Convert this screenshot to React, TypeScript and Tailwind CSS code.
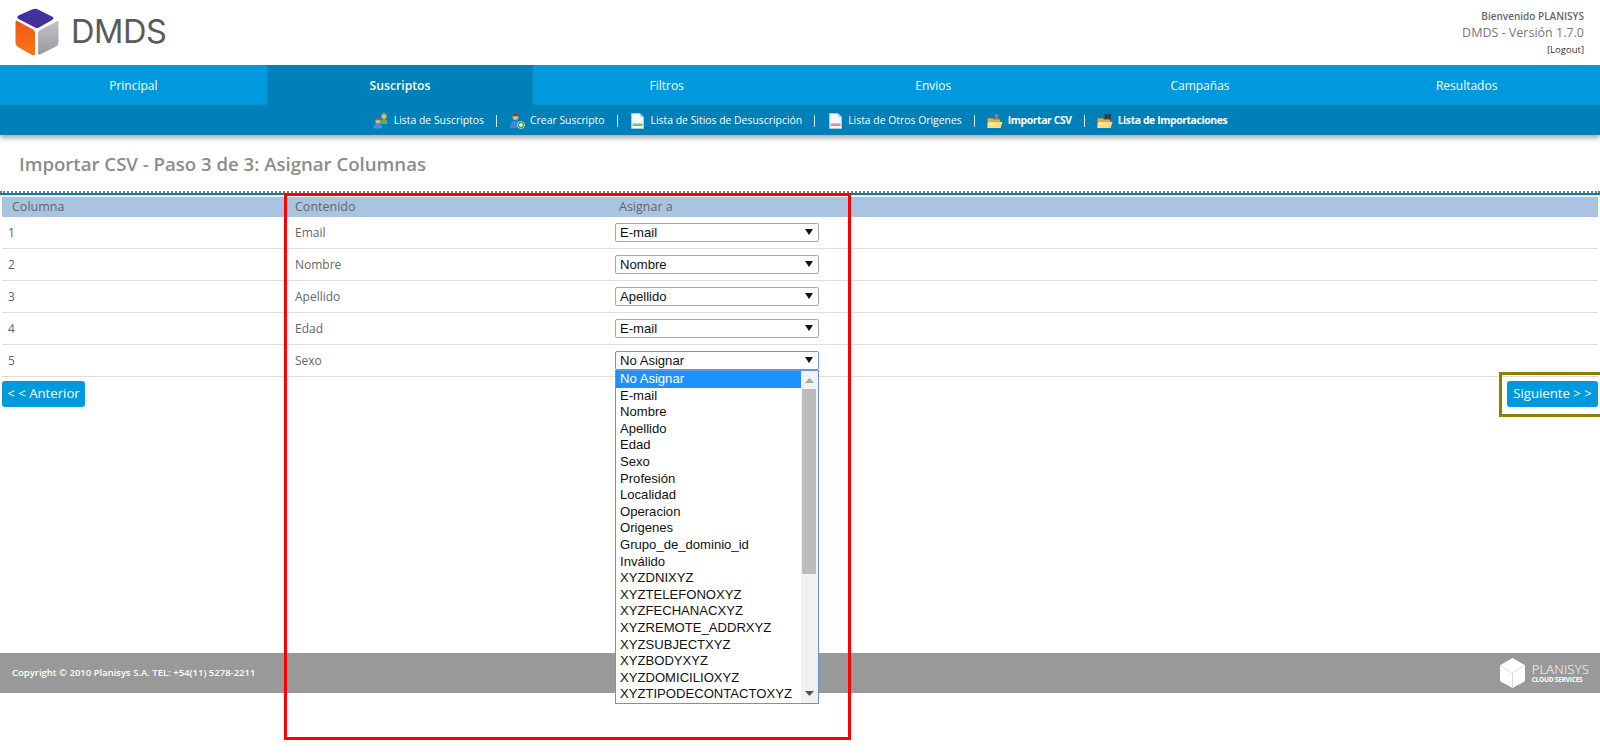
import React from "react";

const tabs = ["Principal", "Suscriptos", "Filtros", "Envios", "Campañas", "Resultados"];

const rows = [
  { n: 1, name: "Email", value: "E-mail" },
  { n: 2, name: "Nombre", value: "Nombre" },
  { n: 3, name: "Apellido", value: "Apellido" },
  { n: 4, name: "Edad", value: "E-mail" },
  { n: 5, name: "Sexo", value: "No Asignar" },
];

const options = [
  "No Asignar", "E-mail", "Nombre", "Apellido", "Edad", "Sexo", "Profesión", "Localidad", "Operacion", "Origenes",
  "Grupo_de_dominio_id", "Inválido", "XYZDNIXYZ", "XYZTELEFONOXYZ", "XYZFECHANACXYZ", "XYZREMOTE_ADDRXYZ",
  "XYZSUBJECTXYZ", "XYZBODYXYZ", "XYZDOMICILIOXYZ", "XYZTIPODECONTACTOXYZ",
];

function Logo() {
  return (
    <svg width="44" height="48" viewBox="0 0 44 48">
      <defs>
        <linearGradient id="lg-orange" x1="0" y1="0" x2="0" y2="1">
          <stop offset="0" stopColor="#f4541c" />
          <stop offset="1" stopColor="#f77a10" />
        </linearGradient>
        <linearGradient id="lg-gray" x1="0" y1="0" x2="0" y2="1">
          <stop offset="0" stopColor="#c3c4c8" />
          <stop offset="1" stopColor="#98999d" />
        </linearGradient>
      </defs>
      <path d="M17 1.5 Q20 0 23 1.5 L37 8.5 Q40 10 37 12 L24 19.5 Q22 20.5 20 19.5 L3.5 11 Q1 9.5 3.5 7.5 Z" fill="#43329c" />
      <path d="M0.5 14 Q0.5 12 2.5 13 L18 21.5 Q20 22.5 20 25 L20 46 Q20 48 17 47 L3 39 Q0.5 37.5 0.5 35 Z" fill="url(#lg-orange)" />
      <path d="M42.5 13 Q43.5 12.5 43.5 14.5 L43.5 34 Q43.5 37 41 38.5 L25 46.5 Q23 47 23 45 L23 25 Q23 23 25 22 Z" fill="url(#lg-gray)" />
    </svg>
  );
}

function PeopleIcon() {
  return (
    <svg width="16" height="16" viewBox="0 0 16 16">
      <circle cx="11" cy="3.2" r="2.6" fill="#eab676" />
      <path d="M8.4 3 Q8.8 .2 11 .2 T13.6 3 Q11 1.6 8.4 3Z" fill="#e09a28" />
      <path d="M7.5 10.5 Q7.5 6 11 6 T14.5 10.5 V11 H7.5Z" fill="#62b04e" />
      <circle cx="5" cy="8" r="2.6" fill="#eab676" />
      <path d="M2.4 7.6 Q2.8 5 5 5 T7.6 7.6 Q5 6.2 2.4 7.6Z" fill="#b5552c" />
      <path d="M.6 15 Q.6 10.8 5 10.8 T9.4 15 V15.5 H.6Z" fill="#4a8ee0" />
    </svg>
  );
}

function AddUserIcon() {
  return (
    <svg width="16" height="16" viewBox="0 0 16 16">
      <circle cx="6.5" cy="4" r="3" fill="#eab676" />
      <path d="M3.5 3.8 Q3.5 .6 6.5 .6 T9.5 3.8 Q6.5 2 3.5 3.8Z" fill="#8a4420" />
      <path d="M1 14.5 Q1 7.6 6.5 7.6 T12 14.5 V15 H1Z" fill="#3f86dc" />
      <circle cx="12" cy="12" r="3.6" fill="#3d9a3d" stroke="#e8f5e8" strokeWidth=".6" />
      <path d="M12 10 V14 M10 12 H14" stroke="#fff" strokeWidth="1.3" />
    </svg>
  );
}

function DocIcon({ color }: { color: string }) {
  return (
    <svg width="13" height="16" viewBox="0 0 13 16">
      <path d="M.5 .5 H9 L12.5 4 V15.5 H.5Z" fill="#f4f8fb" stroke="#c5d6e2" strokeWidth=".6" />
      <path d="M9 .5 V4 H12.5Z" fill="#b9cfe0" />
      <rect x="1.5" y="10.5" width="10" height="2.5" fill={color} />
    </svg>
  );
}

function FolderIcon({ binoculars }: { binoculars?: boolean }) {
  return (
    <svg width="17" height="16" viewBox="0 0 17 16">
      {binoculars ? (
        <g fill="#3a3a3a">
          <rect x="8" y="0.5" width="3" height="6" rx="1" />
          <rect x="12" y="0.5" width="3" height="6" rx="1" />
          <rect x="10.5" y="2" width="2" height="2" />
        </g>
      ) : (
        <g>
          <circle cx="10" cy="2.5" r="2" fill="#c8794a" />
          <path d="M6.5 7 Q6.5 4.5 10 4.5 T13.5 7Z" fill="#3f86dc" />
        </g>
      )}
      <path d="M.5 5 H6 L7.5 6.5 H14 V15.5 H.5Z" fill="#e9a83a" />
      <path d="M1 9 H16.5 L14.5 15.5 H.5Z" fill="#fbdc7e" />
      <rect x="2" y="10.5" width="6" height="1" fill="#fff" />
    </svg>
  );
}

function CubeIcon() {
  return (
    <svg width="25" height="30" viewBox="0 0 25 30">
      <path d="M12.5 0.5 L24.5 7.5 V23 L12.5 29.5 L0.5 23 V7.5Z" fill="#fff" stroke="#fff" strokeLinejoin="round" />
      <path d="M1 8 L12.5 15 L24 8 M12.5 15 V29" fill="none" stroke="#c8c8c8" strokeWidth=".7" />
    </svg>
  );
}

function SubItem({ icon, label, bold, last }: { icon: React.ReactNode; label: string; bold?: boolean; last?: boolean }) {
  return (
    <div className="flex items-center">
      <span className="flex w-[16px] justify-center">{icon}</span>
      <span className={bold ? "ml-[5px] font-bold tracking-[-0.4px]" : "ml-[5px]"}>{label}</span>
      {!last && <span className="mx-[12px] h-[12px] w-px bg-[#d8eef8]" />}
    </div>
  );
}

function Arrow() {
  return (
    <svg width="8" height="6" viewBox="0 0 8 6" className="absolute right-[5px] top-[5px]">
      <path d="M0 0 H8 L4 6Z" fill="#111" />
    </svg>
  );
}

export default function App() {
  return (
    <div className="relative h-[755px] w-[1600px] overflow-hidden bg-white font-['Open_Sans',sans-serif] text-[#666]">
      <header className="flex h-[65px] items-start justify-between">
        <div className="ml-[15px] mt-[8px] flex items-center">
          <Logo />
          <span className="ml-[12px] mt-[-1px] font-['Inter',sans-serif] text-[32.5px] font-normal leading-[48px] tracking-[-0.4px] text-[#5a5a5a]">DMDS</span>
        </div>
        <div className="mr-[16px] mt-[9px] flex flex-col items-end">
          <span className="text-[10px] font-semibold leading-[15px] text-[#666]">Bienvenido PLANISYS</span>
          <span className="text-[12.5px] leading-[18px] text-[#777]">DMDS - Versión 1.7.0</span>
          <span className="mt-[1px] text-[9.5px] leading-[14px] text-[#333]">[Logout]</span>
        </div>
      </header>

      <nav className="grid h-[40px] grid-cols-6 bg-[#0099dd] pt-[2px]">
        {tabs.map((tab) => (
          <div
            key={tab}
            className={
              tab === "Suscriptos"
                ? "-mt-[2px] flex items-center justify-center bg-[#0080b8] pt-[2px] text-[12.2px] font-semibold text-white"
                : "flex items-center justify-center text-[12px] text-white"
            }
          >
            {tab}
          </div>
        ))}
      </nav>

      <div className="flex h-[30px] items-center justify-center bg-[#0080b8] pt-[2px] text-[10.4px] text-white shadow-[0_3px_5px_rgba(0,0,0,0.35)]">
        <SubItem icon={<PeopleIcon />} label="Lista de Suscriptos" />
        <SubItem icon={<AddUserIcon />} label="Crear Suscripto" />
        <SubItem icon={<DocIcon color="#7cc46a" />} label="Lista de Sitios de Desuscripción" />
        <SubItem icon={<DocIcon color="#ee8a94" />} label="Lista de Otros Origenes" />
        <SubItem icon={<FolderIcon />} label="Importar CSV" bold />
        <SubItem icon={<FolderIcon binoculars />} label="Lista de Importaciones" bold last />
      </div>

      <h1 className="flex h-[56px] items-center pl-[19px] pt-[2px] text-[18.6px] font-semibold text-[#8c8c8c]">
        Importar CSV - Paso 3 de 3: Asignar Columnas
      </h1>

      <div className="h-[2px] border-t-2 border-dotted border-[#777]" />
      <div className="h-[2px] bg-[#0080b8]" />

      <main className="h-[458px] px-[2px] pt-[2px]">
        <div className="flex h-[20px] items-center bg-[#a9c4e0] text-[12.5px] text-[#666]">
          <span className="w-[284px] pl-[10px]">Columna</span>
          <span className="w-[329px] pl-[9px]">Contenido</span>
          <span className="pl-[4px]">Asignar a</span>
        </div>
        {rows.map((row) => (
          <div key={row.n} className="flex h-[32px] items-center border-b border-[#ddd] text-[12px]">
            <span className="w-[284px] pl-[6px]">{row.n}</span>
            <span className="w-[329px] pl-[9px]">{row.name}</span>
            <div
              className={
                row.n === 5
                  ? "relative h-[19px] w-[204px] rounded-[2px] border border-[#5f96dc] bg-white pl-[4px] font-['Liberation_Sans',sans-serif] text-[13.1px] leading-[17px] text-[#111]"
                  : "relative h-[19px] w-[204px] rounded-[2px] border border-[#a6a6a6] bg-white pl-[4px] font-['Liberation_Sans',sans-serif] text-[13.1px] leading-[17px] text-[#111]"
              }
            >
              {row.value}
              <Arrow />
            </div>
          </div>
        ))}
        <div className="mt-[4px] flex justify-between">
          <button className="h-[26px] w-[83px] rounded-[3px] bg-[#0099dd] text-[13.2px] text-white">{"< < Anterior"}</button>
          <button className="h-[26px] w-[91px] rounded-[3px] bg-[#0099dd] text-[13.2px] text-white">{"Siguiente > >"}</button>
        </div>
      </main>

      <footer className="flex h-[40px] items-center justify-between bg-[#999] pl-[12px] pr-[11px] text-white">
        <span className="text-[9.5px] font-semibold">Copyright © 2010 Planisys S.A. TEL: +54(11) 5278-2211</span>
        <div className="flex items-center">
          <CubeIcon />
          <div className="ml-[7px] flex flex-col">
            <span className="text-[13px] font-light leading-[14px] tracking-[0.2px]">PLANISYS</span>
            <span className="text-[6.5px] font-bold leading-[8px] tracking-[-0.2px]">CLOUD SERVICES</span>
          </div>
        </div>
      </footer>

      {/* open select list */}
      <div className="absolute left-[615px] top-[370px] flex h-[334px] w-[204px] border border-[#5f96dc] bg-white font-['Liberation_Sans',sans-serif] text-[13.1px] text-[#111]">
        <ul className="flex-1">
          {options.map((opt, i) => (
            <li
              key={opt}
              className={i === 0 ? "h-[16.6px] bg-[#1e90ff] pl-[4px] leading-[16.6px] text-white" : "h-[16.6px] pl-[4px] leading-[16.6px]"}
            >
              {opt}
            </li>
          ))}
        </ul>
        <div className="relative w-[17px] bg-[#f1f1f1]">
          <svg width="9" height="5" viewBox="0 0 9 5" className="absolute left-[4px] top-[7px]">
            <path d="M0 5 H9 L4.5 0Z" fill="#a8a8a8" />
          </svg>
          <div className="absolute left-[1px] top-[18px] h-[185px] w-[14px] bg-[#bcbcbc]" />
          <svg width="9" height="5" viewBox="0 0 9 5" className="absolute bottom-[7px] left-[4px]">
            <path d="M0 0 H9 L4.5 5Z" fill="#505050" />
          </svg>
        </div>
      </div>

      {/* highlight boxes */}
      <div className="absolute left-[284px] top-[193px] h-[547px] w-[567px] border-[3px] border-[#ff0000]" />
      <div className="absolute left-[1499px] top-[372px] h-[45px] w-[110px] border-[3px] border-[#8b8000]" />
    </div>
  );
}
